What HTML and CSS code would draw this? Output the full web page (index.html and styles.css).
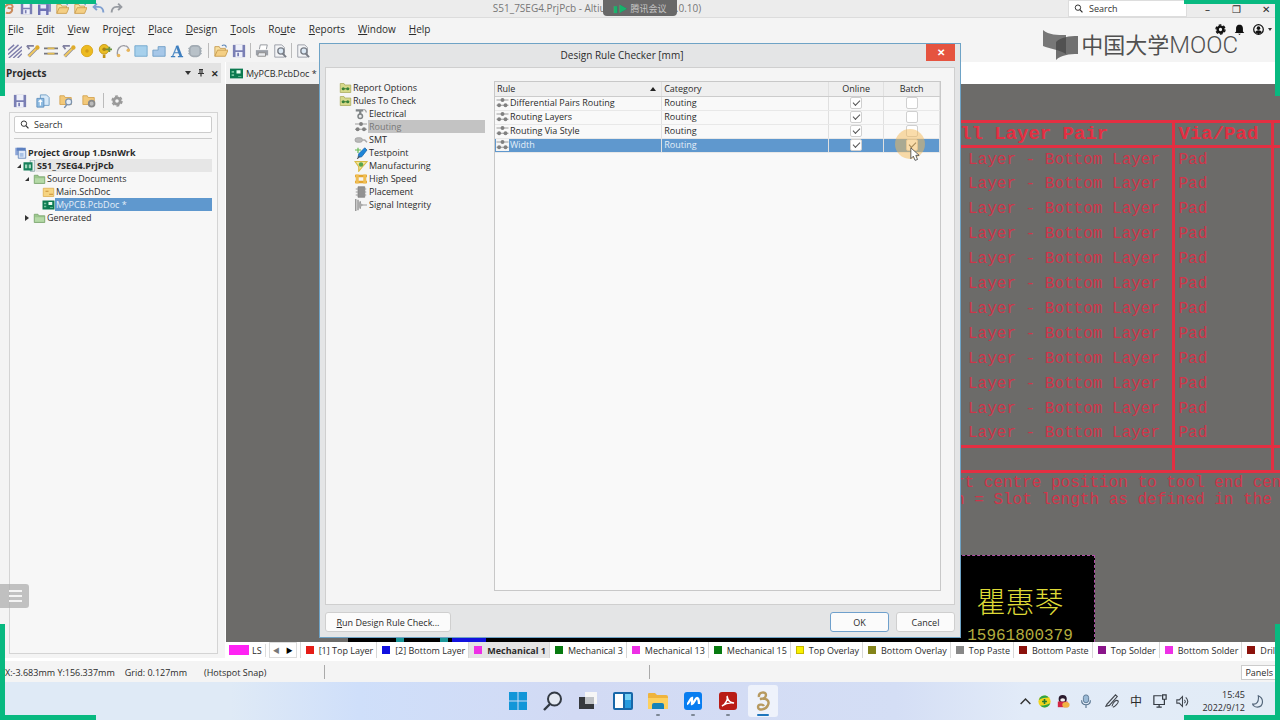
FILE: index.html
```html
<!DOCTYPE html>
<html lang="en">
<head>
<meta charset="utf-8">
<title>S51_7SEG4.PrjPcb - Altium Designer</title>
<link rel="stylesheet" href="styles.css">
</head>
<body>
<svg class="sprite" aria-hidden="true">
  <symbol id="save" viewBox="0 0 16 16"><path d="M1 1h14v14H1z" fill="#7a7fb4"/><path d="M4 1h8v6H4zM4 9h8v6H4z" fill="#eef0fa"/><path d="M6 10h2v4H6z" fill="#7a7fb4"/></symbol>
  <symbol id="saveall" viewBox="0 0 16 16"><path d="M4 0h12v12H4z" fill="#8c90c4"/><path d="M0 3h13v13H0z" fill="#6d71b4"/><path d="M3 3h7v5H3zM3 11h7v5H3z" fill="#e6e8f8"/></symbol>
  <symbol id="open" viewBox="0 0 16 16"><path d="M1 14V3h5l1 2h6v3" fill="#f7dfa0" stroke="#c79a4b"/><path d="M1 14l3-7h12l-3 7z" fill="#f4cf84" stroke="#c79a4b"/><path d="M9 2c3-2 5 0 5 2" fill="none" stroke="#5d86b8" stroke-width="1.3"/></symbol>
  <symbol id="undo" viewBox="0 0 16 16"><path d="M2 6h6c4 0 6 3 6 7M6 2L2 6l4 4" fill="none" stroke="#7f9fd0" stroke-width="2.4"/></symbol>
  <symbol id="redo" viewBox="0 0 16 16"><path d="M14 6H8c-4 0-6 3-6 7M10 2l4 4-4 4" fill="none" stroke="#979ba1" stroke-width="2.4"/></symbol>
  <symbol id="app" viewBox="0 0 16 16"><path d="M2 9C4 2 12 1 13 5c1 3-4 3-6 2m5 1c2 4-3 7-7 5" fill="none" stroke="#c98a5a" stroke-width="2.4"/></symbol>
  <symbol id="hatch" viewBox="0 0 16 16"><path d="M0 7l7-6M0 12L12 1M1 16L16 3M6 16l10-9M11 16l5-5" stroke="#7d7daa" stroke-width="1.6"/></symbol>
  <symbol id="track" viewBox="0 0 16 16"><path d="M1 2h8M1 2l3 4" fill="none" stroke="#8080a0" stroke-width="2"/><path d="M3 14L12 5" stroke="#8a8a9a" stroke-width="4"/><path d="M3 14L12 5" stroke="#f0c860" stroke-width="2.4"/><circle cx="13" cy="4" r="2.5" fill="#dfac2c"/></symbol>
  <symbol id="pairs" viewBox="0 0 16 16"><path d="M0 5h16M0 11h16" stroke="#77777f" stroke-width="1.8"/><path d="M4 5h8M4 11h8" stroke="#e1bb53" stroke-width="2"/></symbol>
  <symbol id="pad" viewBox="0 0 16 16"><circle cx="8" cy="8" r="6.5" fill="#edbb20" stroke="#d9a51a"/><circle cx="8" cy="8" r="2" fill="#d39c18"/></symbol>
  <symbol id="via" viewBox="0 0 16 16"><circle cx="7" cy="6" r="5.5" fill="#e9bd24" stroke="#c39313"/><path d="M7 12v4" stroke="#c39313" stroke-width="3"/><path d="M8 6h8M13 3v6" stroke="#6c9440" stroke-width="2"/><circle cx="7" cy="6" r="2" fill="#a98314"/></symbol>
  <symbol id="arc" viewBox="0 0 16 16"><path d="M2 14C0 6 5 1 10 2c3 0 5 3 5 6" fill="none" stroke="#9b9ba3" stroke-width="1.6"/><circle cx="3" cy="13" r="2" fill="#e7b55b"/><circle cx="14" cy="7" r="2" fill="#e7b55b"/></symbol>
  <symbol id="fill" viewBox="0 0 16 16"><path d="M1 2h14v12H1z" fill="#a6d0ec" stroke="#6fa6cb"/></symbol>
  <symbol id="poly" viewBox="0 0 16 16"><path d="M1 14V7h6V3h8v11z" fill="#a6c7e8" stroke="#6d9dc6"/></symbol>
  <symbol id="letter" viewBox="0 0 16 16"><path d="M3 14L8 2" stroke="#5b93c9" stroke-width="1.5"/><path d="M8 2l4.500 12" stroke="#3f7fbf" stroke-width="3"/><path d="M5 10h6M1 14.500h5M9 14.500h6" stroke="#3f7fbf" stroke-width="1.400"/></symbol>
  <symbol id="chip" viewBox="0 0 16 16"><rect x="2" y="2" width="12" height="12" rx="4" fill="#b8c1c8" stroke="#a2abb3" stroke-width="2"/><path d="M0 5h2M0 8h2M0 11h2M14 5h2M14 8h2M14 11h2" stroke="#a2abb3"/></symbol>
  <symbol id="print" viewBox="0 0 16 16"><path d="M5 6l1-5h8l-1 5" fill="#fff" stroke="#8b8f96"/><path d="M1 7h14v6H1z" fill="#9ca0a8"/><path d="M4 10h8v4H3z" fill="#e9ebee" stroke="#888"/></symbol>
  <symbol id="preview" viewBox="0 0 16 16"><path d="M2 1h8l3 3v11H2z" fill="#f3f4f6" stroke="#9297a0"/><circle cx="9" cy="8" r="3.5" fill="#dbe8f4" stroke="#787d86" stroke-width="1.5"/><path d="M11 11l4 4" stroke="#787d86" stroke-width="2"/></symbol>
  <symbol id="docs" viewBox="0 0 16 16"><path d="M5 1h7l3 3v9H5z" fill="#d7e9f8" stroke="#6a9ac4"/><path d="M1 5h8v10H1z" fill="#8fbce2" stroke="#5b8dbb"/><path d="M5 13V7m-2 2l2-2 2 2" fill="none" stroke="#fff" stroke-width="1.4"/></symbol>
  <symbol id="foldsearch" viewBox="0 0 16 16"><path d="M1 12V2h5l1 2h7v8z" fill="#f3c979" stroke="#d3a451"/><circle cx="11" cy="9" r="3.4" fill="#e5eef8" stroke="#7d93ad" stroke-width="1.4"/><path d="M9 12l-3 4" stroke="#7d93ad" stroke-width="1.6"/></symbol>
  <symbol id="foldgear" viewBox="0 0 16 16"><path d="M1 12V2h5l1 2h7v8z" fill="#f3c979" stroke="#d3a451"/><circle cx="11" cy="11" r="3.3" fill="#bbb" stroke="#8a8a8a" stroke-width="2"/></symbol>
  <symbol id="gear" viewBox="0 0 16 16"><circle cx="8" cy="8" r="4.2" fill="none" stroke="currentColor" stroke-width="3.6"/><circle cx="8" cy="8" r="6.6" fill="none" stroke="currentColor" stroke-width="2" stroke-dasharray="3.900 3"/></symbol>
  <symbol id="lens" viewBox="0 0 16 16"><circle cx="7" cy="6.5" r="4.8" fill="none" stroke="currentColor" stroke-width="1.7"/><path d="M10.5 10l4.5 5" stroke="currentColor" stroke-width="2"/></symbol>
  <symbol id="group" viewBox="0 0 16 16"><path d="M1 1h10v10H1z" fill="#8da6d8"/><path d="M5 3h8l2 2v10H5z" fill="#dfe8f8" stroke="#5477ad"/><path d="M3 1h12v4H3z" fill="#5d80c0"/><path d="M7 8h5v5H7z" fill="#a9c2e6"/></symbol>
  <symbol id="project" viewBox="0 0 16 16"><path d="M9 0h6v15H9z" fill="#e8f0ee" stroke="#78959a"/><path d="M0 3h12v11H0z" fill="#17805a"/><path d="M2 6h3v5H2zM7 6h3v5H7z" fill="#a3d8bd"/></symbol>
  <symbol id="green" viewBox="0 0 16 16"><path d="M1 14V3h5l1 2h8v9z" fill="#9cc78d" stroke="#74a067"/><path d="M2 7h12v6H2z" fill="#b5d9a7"/></symbol>
  <symbol id="sch" viewBox="0 0 16 16"><path d="M1 3h14v11H1z" fill="#f6d481" stroke="#dcab4c"/><path d="M4 7h4m1 4h5" stroke="#c98f38" stroke-width="1.6"/></symbol>
  <symbol id="pcb" viewBox="0 0 16 16"><path d="M0 2h16v12H0z" fill="#0c7a50"/><path d="M8 4h5v4H8z" fill="#e8fff2"/><path d="M2 5h3v2H2zm0 4h3v2H2zm8 2h4v1h-4z" fill="#75c59e"/></symbol>
  <symbol id="rules" viewBox="0 0 16 16"><path d="M1 14V2h5l1 2h8v10z" fill="#d6d98a" stroke="#a8a95b"/><path d="M3 9h10" stroke="#3a7f35" stroke-width="1.3"/><circle cx="5" cy="9" r="2" fill="#398139"/><circle cx="11" cy="9" r="2" fill="#398139"/></symbol>
  <symbol id="electrical" viewBox="0 0 16 16"><path d="M1 3h10M7 4v4" stroke="#7f8486" stroke-width="3"/><circle cx="7" cy="11" r="3" fill="#eee" stroke="#7f8486" stroke-width="2"/><path d="M11 2c3 0 4 2 4 4" fill="none" stroke="#9a9a9a" stroke-width="1.500"/></symbol>
  <symbol id="routing" viewBox="0 0 16 16"><path d="M0 4h16M0 11h16" stroke="#9a9a9a" stroke-width="1.3"/><circle cx="8" cy="4" r="2.6" fill="#808080"/><circle cx="3.5" cy="11" r="2.6" fill="#808080"/><circle cx="12" cy="11" r="2.6" fill="#808080"/></symbol>
  <symbol id="smt" viewBox="0 0 16 16"><rect x="0" y="5" width="10" height="6" rx="3" fill="#b9b9b9" stroke="#999"/><path d="M10 8h3l3 3" fill="none" stroke="#aaa" stroke-width="2"/></symbol>
  <symbol id="test" viewBox="0 0 16 16"><path d="M5 9l8-8 3 3-7 9-5 1z" fill="#1c85d8" stroke="#1562a7"/><path d="M3 16l3-4" stroke="#555" stroke-width="1.5"/><path d="M4 1v7M0 4h8" stroke="#65ba51" stroke-width="1.6"/></symbol>
  <symbol id="manu" viewBox="0 0 16 16"><path d="M0 2h16L10 9l-5 6V9z" fill="#f0e39a" stroke="#d8bb43" stroke-width="1.500"/><circle cx="8" cy="6" r="3" fill="#58a44d"/></symbol>
  <symbol id="speed" viewBox="0 0 16 16"><path d="M0 4h16M0 12h16" stroke="#e3a52f" stroke-width="3.500"/><path d="M3 2v12M13 2v12" stroke="#efbd53" stroke-width="4"/></symbol>
  <symbol id="place" viewBox="0 0 16 16"><path d="M4 1h9v14H4z" fill="#929292" stroke="#808080"/><path d="M1 4h3M1 8h3M1 12h3M13 4h2M13 8h2M13 12h2" stroke="#9b9b9b" stroke-width="1.6"/></symbol>
  <symbol id="signal" viewBox="0 0 16 16"><path d="M1 0v16M4 1v14M7 3v10" stroke="#999" stroke-width="2"/><path d="M4 3l7 5-7 5z" fill="#aaa"/><path d="M8 8h8" stroke="#aaa" stroke-width="1.6"/></symbol>
  <symbol id="bell" viewBox="0 0 16 16"><path d="M8 1c-4 0-5 3-5 6v4l-2 2h14l-2-2V7c0-3-1-6-5-6zM6 14h4l-2 2z" fill="#111"/></symbol>
  <symbol id="user" viewBox="0 0 16 16"><circle cx="8" cy="8" r="7" fill="none" stroke="#111" stroke-width="1.8"/><circle cx="8" cy="6" r="2.6" fill="#111"/><path d="M3 12c2-4 8-4 10 0l-5 3z" fill="#111"/></symbol>
  <symbol id="pin" viewBox="0 0 16 16"><path d="M4 1h8M6 1v8m4-8v8M2 9h12M8 9v6" stroke="#333" stroke-width="2.4"/></symbol>
  <symbol id="windows" viewBox="0 0 20 20"><path d="M1 1h8.500v8.500H1zM10.500 1H19v8.500h-8.500zM1 10.500h8.500V19H1zM10.500 10.500H19V19h-8.500z" fill="#1296d8"/></symbol>
  <symbol id="find" viewBox="0 0 20 20"><circle cx="11.500" cy="8" r="6.500" fill="#e4e9f2" stroke="#333a44" stroke-width="2"/><path d="M7 13l-6 6" stroke="#333a44" stroke-width="2.400"/></symbol>
  <symbol id="tasks" viewBox="0 0 20 20"><path d="M7 1h12v12H7z" fill="#f6f6f6"/><path d="M1 6h15v12H1z" fill="#36393d"/><path d="M7 6h9v7H7z" fill="#bfc2c6"/></symbol>
  <symbol id="widgets" viewBox="0 0 20 20"><rect x="0" y="1" width="20" height="18" rx="2" fill="#1767a9"/><path d="M2 3h8v14H2z" fill="#fff"/><path d="M12 3h6v6h-6z" fill="#75d1f5"/><path d="M12 9h6v8h-6z" fill="#269bdf"/></symbol>
  <symbol id="folder" viewBox="0 0 20 20"><path d="M0 17V3q0-1 1-1h6l2 2h9q2 0 2 2v11z" fill="#efb43e"/><path d="M0 7h20v11H0z" fill="#fdd05e"/><path d="M4 18v-4q0-2 2-2h8q2 0 2 2v4z" fill="#1682b8"/></symbol>
  <symbol id="meeting" viewBox="0 0 20 20"><rect x="1" y="1" width="18" height="18" rx="3" fill="#087df0"/><path d="M4 13c2 0 3-6 5-6v6c2 0 3-6 5-6 1 0 2 2 2 6" fill="none" stroke="#fff" stroke-width="2.300"/></symbol>
  <symbol id="pdf" viewBox="0 0 20 20"><rect x="1" y="1" width="18" height="18" rx="3" fill="#b91c16"/><path d="M4 15c4-2 6-7 5-10 1 5 3 7 7 7-5-1-8 0-12 3z" fill="none" stroke="#fff" stroke-width="1.400"/></symbol>
  <symbol id="altium" viewBox="0 0 20 20"><path d="M6 6C5 1 13 0 13 4c0 3-3 4-6 4 6-2 10 2 8 6-2 5-10 6-10 2 0-3 5-3 6-1" fill="none" stroke="#b79a60" stroke-width="2.400"/></symbol>
  <symbol id="chev" viewBox="0 0 16 16"><path d="M2 11l6-6 6 6" fill="none" stroke="#333" stroke-width="1.800"/></symbol>
  <symbol id="guard" viewBox="0 0 16 16"><circle cx="8" cy="8" r="7.500" fill="#f1d51c"/><path d="M1 6c2-6 9-7 12-3C8 3 5 4 1 6zM15 10c-2 6-9 7-12 3 5 0 8-1 12-3z" fill="#2ba44a"/><path d="M8 5v6M5 8h6" stroke="#227a31" stroke-width="2"/></symbol>
  <symbol id="qq" viewBox="0 0 16 16"><circle cx="7" cy="5" r="5" fill="#2a1a2e"/><path d="M1 8h12v7H1z" fill="#d32645"/><ellipse cx="7" cy="6" rx="3" ry="2" fill="#f5f0f0"/><ellipse cx="11" cy="12" rx="4.500" ry="3.500" fill="#f1b341"/></symbol>
  <symbol id="mic" viewBox="0 0 16 16"><rect x="5" y="1" width="6" height="9" rx="3" fill="#9bbad6" stroke="#58748f"/><path d="M3 7c0 7 10 7 10 0M8 12v4" fill="none" stroke="#58748f" stroke-width="1.300"/></symbol>
  <symbol id="pen" viewBox="0 0 16 16"><path d="M2 12L12 1l2 2-9 10-4 1zM8 14c1-5 5-8 7-6 1 2-4 7-6 7" fill="none" stroke="#43484f" stroke-width="1.300"/></symbol>
  <symbol id="screen" viewBox="0 0 16 16"><path d="M10 2H1v10h12V9M7 12v3M4 15h6M11 1h4v5h-4zM13 6v4" fill="none" stroke="#343a42" stroke-width="1.400"/></symbol>
  <symbol id="speaker" viewBox="0 0 16 16"><path d="M1 6h3l4-4v12l-4-4H1zM10 6c2 1 2 3 0 4M12 3c3 3 3 7 0 10" fill="none" stroke="#40464e" stroke-width="1.300"/></symbol>
  <symbol id="moon" viewBox="0 0 16 16"><path d="M9 1c7 3 7 13-1 14-4 0-6-3-6-4 5 1 8-3 7-10z" fill="none" stroke="#53667a" stroke-width="1.400"/></symbol>
</svg>

<header class="titlebar">
  <div class="quick">
    <svg><use href="#app"/></svg><svg><use href="#save"/></svg><svg><use href="#saveall"/></svg><svg><use href="#open"/></svg><svg><use href="#open"/></svg><svg><use href="#undo"/></svg><svg><use href="#redo"/></svg>
  </div>
  <div class="apptitle">S51_7SEG4.PrjPcb - Altium Designer (20.0.10)</div>
  <div class="titleright">
    <label class="topsearch"><svg><use href="#lens"/></svg><input type="text" placeholder="Search" aria-label="Search"></label>
    <div class="winbtns"><button aria-label="Minimize">–</button><button aria-label="Restore">❐</button><button aria-label="Close">✕</button></div>
  </div>
  <div class="meetingbar"><span class="live">▮▶</span>腾讯会议</div>
</header>

<nav class="menubar">
  <button><u>F</u>ile</button><button><u>E</u>dit</button><button><u>V</u>iew</button><button>Proje<u>c</u>t</button><button><u>P</u>lace</button><button><u>D</u>esign</button><button><u>T</u>ools</button><button>Ro<u>u</u>te</button><button><u>R</u>eports</button><button><u>W</u>indow</button><button><u>H</u>elp</button>
  <div class="account"><svg><use href="#gear"/></svg><svg><use href="#bell"/></svg><svg><use href="#user"/></svg><i class="down"></i></div>
</nav>

<div class="toolbar">
  <svg><use href="#hatch"/></svg><svg><use href="#track"/></svg><svg><use href="#pairs"/></svg><svg><use href="#track"/></svg><svg><use href="#pad"/></svg><svg><use href="#via"/></svg><svg><use href="#arc"/></svg><svg><use href="#fill"/></svg><svg><use href="#poly"/></svg><svg><use href="#letter"/></svg><svg><use href="#chip"/></svg><i class="wide"></i><svg><use href="#open"/></svg><svg><use href="#save"/></svg><i></i><svg><use href="#print"/></svg><svg><use href="#preview"/></svg><i></i><svg><use href="#preview"/></svg>
</div>

<main class="main">
  <aside class="projects">
    <div class="panelhead"><h2>Projects</h2><i class="down"></i><svg><use href="#pin"/></svg><span class="x">✕</span></div>
    <div class="paneltools"><svg><use href="#save"/></svg><svg><use href="#docs"/></svg><svg><use href="#foldsearch"/></svg><svg><use href="#foldgear"/></svg><i></i><svg class="grey"><use href="#gear"/></svg></div>
    <div class="panelbody">
      <label class="search"><svg><use href="#lens"/></svg><input type="text" placeholder="Search" aria-label="Search projects"></label>
      <hr>
      <ul class="tree">
        <li class="bold"><svg><use href="#group"/></svg><span>Project Group 1.DsnWrk</span></li>
        <li class="bold lvl1"><b class="open"></b><svg><use href="#project"/></svg><span class="shade">S51_7SEG4.PrjPcb</span></li>
        <li class="lvl2"><b class="open"></b><svg><use href="#green"/></svg><span>Source Documents</span></li>
        <li class="lvl3"><svg><use href="#sch"/></svg><span>Main.SchDoc</span></li>
        <li class="lvl3"><svg><use href="#pcb"/></svg><span class="sel">MyPCB.PcbDoc *</span></li>
        <li class="lvl2"><b class="shut"></b><svg><use href="#green"/></svg><span>Generated</span></li>
      </ul>
    </div>
  </aside>

  <section class="work">
    <div class="doctabs"><button><svg><use href="#pcb"/></svg>MyPCB.PcbDoc *</button></div>
    <div class="canvas">
      <table class="drill">
        <colgroup><col class="c1"><col class="c2"><col class="c3"></colgroup>
        <thead><tr><th>ll Layer Pair</th><th>Via/Pad</th><th></th></tr></thead>
        <tbody>
          <tr><td>Layer - Bottom Layer</td><td>Pad</td><td></td></tr>
          <tr><td>Layer - Bottom Layer</td><td>Pad</td><td></td></tr>
          <tr><td>Layer - Bottom Layer</td><td>Pad</td><td></td></tr>
          <tr><td>Layer - Bottom Layer</td><td>Pad</td><td></td></tr>
          <tr><td>Layer - Bottom Layer</td><td>Pad</td><td></td></tr>
          <tr><td>Layer - Bottom Layer</td><td>Pad</td><td></td></tr>
          <tr><td>Layer - Bottom Layer</td><td>Pad</td><td></td></tr>
          <tr><td>Layer - Bottom Layer</td><td>Pad</td><td></td></tr>
          <tr><td>Layer - Bottom Layer</td><td>Pad</td><td></td></tr>
          <tr><td>Layer - Bottom Layer</td><td>Pad</td><td></td></tr>
          <tr><td>Layer - Bottom Layer</td><td>Pad</td><td></td></tr>
          <tr><td>Layer - Bottom Layer</td><td>Pad</td><td></td></tr>
        </tbody>
        <tfoot><tr><td></td><td></td><td></td></tr></tfoot>
      </table>
      <p class="notes">rt centre position to tool end cen<br>h = Slot length as defined in the</p>
      <div class="board"><div class="owner"><span class="name">瞿惠琴</span><span class="phone">15961800379</span></div><div class="traces"><i></i><i></i><i class="blue"></i></div></div>
    </div>
    <div class="layers">
      <div class="ls"><i></i><span>LS</span></div>
      <div class="scroll"><button aria-label="Scroll left" class="off">◀</button><button aria-label="Scroll right">▶</button></div>
      <button class="layer"><i class="red"></i>[1] Top Layer</button><button class="layer"><i class="blue"></i>[2] Bottom Layer</button><button class="layer on"><i class="pink"></i>Mechanical 1</button><button class="layer"><i class="dgreen"></i>Mechanical 3</button><button class="layer"><i class="pink"></i>Mechanical 13</button><button class="layer"><i class="dgreen"></i>Mechanical 15</button><button class="layer"><i class="yellow"></i>Top Overlay</button><button class="layer"><i class="olive"></i>Bottom Overlay</button><button class="layer"><i class="gray"></i>Top Paste</button><button class="layer"><i class="maroon"></i>Bottom Paste</button><button class="layer"><i class="purple"></i>Top Solder</button><button class="layer"><i class="pink"></i>Bottom Solder</button><button class="layer"><i class="maroon"></i>Drill</button>
    </div>
  </section>
</main>

<footer class="status">
  <div class="coords"><span>X:-3.683mm Y:156.337mm</span><span>Grid: 0.127mm</span><span class="snap">(Hotspot Snap)</span></div>
  <div class="cell"></div><div class="cell"></div>
  <button>Panels</button>
</footer>

<div class="taskbar">
  <div class="apps">
    <button aria-label="Start"><svg><use href="#windows"/></svg></button><button aria-label="Search"><svg><use href="#find"/></svg></button><button aria-label="Task view"><svg><use href="#tasks"/></svg></button><button aria-label="Widgets"><svg><use href="#widgets"/></svg></button><button aria-label="Explorer" class="run"><svg><use href="#folder"/></svg></button><button aria-label="Meeting" class="run"><svg><use href="#meeting"/></svg></button><button aria-label="Acrobat" class="run"><svg><use href="#pdf"/></svg></button><button aria-label="Altium" class="run current"><svg><use href="#altium"/></svg></button>
  </div>
  <div class="tray">
    <svg><use href="#chev"/></svg><svg><use href="#guard"/></svg><svg><use href="#qq"/></svg><svg class="wide"><use href="#mic"/></svg><svg class="wide"><use href="#pen"/></svg><span class="ime">中</span><svg class="wide"><use href="#screen"/></svg><svg><use href="#speaker"/></svg>
    <time>15:45<br>2022/9/12</time><svg><use href="#moon"/></svg>
  </div>
</div>

<section class="dialog" role="dialog" aria-labelledby="dlgtitle">
  <div class="dlghead"><h1 id="dlgtitle">Design Rule Checker [mm]</h1><button class="close" aria-label="Close dialog">✕</button></div>
  <div class="dlgbody">
    <ul class="tree rules">
      <li><svg><use href="#rules"/></svg><span>Report Options</span></li>
      <li><svg><use href="#rules"/></svg><span>Rules To Check</span></li>
      <li class="sub"><svg><use href="#electrical"/></svg><span>Electrical</span></li>
      <li class="sub"><svg><use href="#routing"/></svg><span class="dim">Routing</span></li>
      <li class="sub"><svg><use href="#smt"/></svg><span>SMT</span></li>
      <li class="sub"><svg><use href="#test"/></svg><span>Testpoint</span></li>
      <li class="sub"><svg><use href="#manu"/></svg><span>Manufacturing</span></li>
      <li class="sub"><svg><use href="#speed"/></svg><span>High Speed</span></li>
      <li class="sub"><svg><use href="#place"/></svg><span>Placement</span></li>
      <li class="sub"><svg><use href="#signal"/></svg><span>Signal Integrity</span></li>
    </ul>
    <div class="gridbox">
      <table class="grid">
        <colgroup><col class="g1"><col class="g1"><col class="g2"><col class="g2"></colgroup>
        <thead><tr><th><div class="sort">Rule<i class="up"></i></div></th><th>Category</th><th class="mid">Online</th><th class="mid">Batch</th></tr></thead>
        <tbody>
          <tr><td><div class="rule"><svg><use href="#routing"/></svg><span>Differential Pairs Routing</span></div></td><td>Routing</td><td class="mid"><input type="checkbox" checked aria-label="Differential Pairs Routing online"></td><td class="mid"><input type="checkbox" aria-label="Differential Pairs Routing batch"></td></tr>
          <tr><td><div class="rule"><svg><use href="#routing"/></svg><span>Routing Layers</span></div></td><td>Routing</td><td class="mid"><input type="checkbox" checked aria-label="Routing Layers online"></td><td class="mid"><input type="checkbox" aria-label="Routing Layers batch"></td></tr>
          <tr><td><div class="rule"><svg><use href="#routing"/></svg><span>Routing Via Style</span></div></td><td>Routing</td><td class="mid"><input type="checkbox" checked aria-label="Routing Via Style online"></td><td class="mid"><input type="checkbox" aria-label="Routing Via Style batch"></td></tr>
          <tr class="picked"><td><div class="rule"><svg><use href="#routing"/></svg><span>Width</span></div></td><td>Routing</td><td class="mid"><input type="checkbox" checked aria-label="Width online"></td><td class="mid"><input type="checkbox" checked aria-label="Width batch"></td></tr>
        </tbody>
      </table>
    </div>
  </div>
  <div class="dlgfoot"><button class="runbtn"><u>R</u>un Design Rule Check...</button><button class="ok">OK</button><button>Cancel</button></div>
</section>

<div class="pointer"><svg viewBox="0 0 12 18"><path d="M1 1v13l3-3 2 5 3-1-2-5h4z" fill="#fff" stroke="#444"/></svg></div>
<div class="brand"><svg viewBox="0 0 36 32"><path d="M1 1c6 5 14 5 23 5v19C15 20 8 20 1 17z" fill="#777"/><path d="M36 7c-9 0-17 1-22 6v18c5-5 13-6 22-6z" fill="#444" fill-opacity=".75"/></svg><span class="cn">中国大学</span><span class="en">MOOC</span></div>
<button class="drawer" aria-label="Open drawer"><i></i><i></i><i></i></button>
<div class="corner tl"></div><div class="corner tr"></div><div class="corner bl"></div><div class="corner br"></div>
</body>
</html>
```
FILE: styles.css
```css
* { box-sizing: border-box; }
body {
  margin: 0; min-height: 100vh; display: flex; flex-direction: column; position: relative; overflow: hidden;
  font: 9px/13px "Open Sans", "Noto Sans", "Noto Sans CJK SC", sans-serif; color: #2b2b2b; background: #f4f4f4;
}
button, input { font: inherit; color: inherit; border: 0; background: none; padding: 0; margin: 0; }
input::placeholder { color: #333; opacity: 1; }
h1, h2, ul, p { margin: 0; padding: 0; font-size: inherit; font-weight: inherit; list-style: none; }
svg { width: 13px; height: 13px; flex: none; display: block; }
.sprite { position: absolute; width: 0; height: 0; }
.down { border: 3px solid transparent; border-top: 4px solid #333; border-bottom: 0; }
.up { border: 3px solid transparent; border-bottom: 4px solid #222; border-top: 0; }

.titlebar { position: relative; height: 18px; display: grid; grid-template-columns: 1fr auto 1fr; align-items: center; background: #ececec; border-bottom: 1px solid #dcdcdc; }
.quick { display: flex; gap: 5px; padding-left: 2px; }
.apptitle { font-size: 10px; color: #777; padding-right: 86px; }
.titleright { display: flex; justify-content: flex-end; align-self: start; }
.topsearch { display: flex; align-items: center; gap: 6px; width: 119px; height: 17px; background: #fff; border: 1px solid #ddd; padding-left: 5px; }
.topsearch svg, .search svg { width: 9px; height: 9px; }
.topsearch input, .search input { width: 100%; min-width: 0; }
.winbtns { display: flex; gap: 20px; padding: 2px 10px 0 16px; font-size: 10px; }
.winbtns button { width: 9px; text-align: center; }
.meetingbar { position: absolute; left: 603px; top: 0; width: 74px; height: 16px; background: #686868; border-radius: 0 0 4px 4px; color: #c4c4c4; font-size: 9px; text-align: center; line-height: 17px; white-space: nowrap; }
.live { color: #18b36c; margin-right: 3px; }

.menubar { height: 23px; display: flex; align-items: center; gap: 13px; padding-left: 8px; font-size: 10px; }
.menubar button { margin-right: -1px; padding-right: 1px; }
.account { margin-left: auto; display: flex; align-items: center; gap: 8px; padding-right: 8px; color: #111; }
.account svg { width: 11px; height: 11px; }
.account .down { margin-left: -4px; border-width: 3px 2px 0; }

.toolbar { height: 21px; display: flex; align-items: center; gap: 4px; padding: 0 8px 2px; }
.toolbar svg { width: 14px; height: 14px; }
.toolbar > i, .paneltools > i { width: 1px; height: 15px; background: #bbb; }
.toolbar > .wide { margin: 0 1px 0 2px; }

.main { flex: 1; display: flex; min-height: 0; }
.projects { width: 226px; flex: none; display: flex; flex-direction: column; padding: 1px 4px 4px 5px; border-right: 1px solid #fff; }
.panelhead { display: flex; align-items: center; height: 20px; background: #e3e3e3; gap: 6px; padding: 0 2px 0 1px; }
.panelhead h2 { flex: 1; font-weight: bold; font-size: 10px; }
.panelhead svg { width: 8px; height: 8px; }
.x { font-size: 9px; font-weight: bold; }
.paneltools { display: flex; align-items: center; gap: 9px; height: 29px; padding: 6px 9px 0 8px; }
.paneltools svg { width: 14px; height: 14px; }
.paneltools > i { margin: 0 -2px; }
.grey { color: #999; }
.paneltools .grey { width: 12px; height: 12px; }
.panelbody { flex: 1; border: 1px solid #d4d4d4; margin: 0 3px 0 4px; padding: 3px 5px 3px 4px; background: #f7f7f7; }
.search { display: flex; align-items: center; gap: 5px; height: 17px; background: #fff; border: 1px solid #ccc; border-radius: 2px; padding-left: 5px; }
.panelbody hr { border: 0; border-top: 1px solid #ccc; margin: 5px 0 7px; }
.tree li { display: flex; align-items: center; height: 13px; white-space: nowrap; }
.tree span { flex: 1; padding-left: 1px; }
.tree li svg { height: 12px; }
.bold { font-weight: bold; }
.lvl1 { padding-left: 1px; } .lvl2 { padding-left: 9px; } .lvl3 { padding-left: 28px; }
.open { border-left: 4px solid transparent; border-bottom: 4px solid #333; margin: 0 4px 0 2px; }
.shut { border: 3px solid transparent; border-left: 4px solid #333; border-right: 0; margin: 0 4px 0 2px; }
.lvl1 .open { margin-right: 2px; }
.shade { background: #e6e6e6; }
.tree .sel, .picked { background: #5f98ce; color: #e4eef8; }

.work { flex: 1; min-width: 0; display: flex; flex-direction: column; }
.doctabs { height: 22px; display: flex; background: #fff; }
.doctabs button { display: flex; align-items: center; gap: 3px; background: #f0f0f0; padding: 0 4px; border-right: 1px solid #d5d5d5; }
.canvas { flex: 1; position: relative; overflow: hidden; background: #6c6b69; }
.drill { position: absolute; left: 734px; top: 36px; width: 340px; table-layout: fixed; border-collapse: collapse; font: 16px/20px "Liberation Mono", monospace; color: #d0354a; white-space: nowrap; }
.c1 { width: 213px; } .c2 { width: 99px; }
.drill tr { height: 25px; }
.drill th, .drill td { padding: 0 0 0 4px; text-align: left; border-left: 3px solid #e42f42; }
.drill th { font-size: 19px; font-weight: bold; color: #e42f42; border-top: 3px solid #e42f42; border-bottom: 3px solid #e42f42; }
.drill td:first-child { padding-left: 8px; border-left: 0; }
.drill th:first-child { padding-left: 0; border-left: 0; }
.drill tfoot td { border-top: 3px solid #e42f42; border-bottom: 3px solid #e42f42; }
.notes { position: absolute; left: 729px; top: 391px; width: 340px; font: 16px/17px "Liberation Mono", monospace; color: #d0354a; white-space: nowrap; }
.board { position: absolute; left: 122px; top: 471px; bottom: 0; width: 747px; background: #000; border: 1px dashed #b04fa8; border-width: 1px 1px 0 0; }
.owner { display: flex; flex-direction: column; align-items: center; width: 148px; margin: 26px 0 0 auto; }
.name { font: 29px/36px "Noto Sans CJK SC", sans-serif; font-weight: 300; color: #ddd936; }
.phone { font: 16px/20px "Liberation Mono", monospace; color: #b4ad3e; padding-top: 8px; }
.traces { position: absolute; left: 48px; bottom: 0; display: flex; gap: 36px; }
.traces i { width: 8px; height: 4px; background: #1c9698; }
.traces .blue { width: 34px; background: #1212dd; margin-left: -32px; }

.layers { height: 16px; display: flex; background: #fff; overflow: hidden; white-space: nowrap; }
.ls { display: flex; align-items: center; padding: 0 3px; flex: none; }
.ls i { width: 20px; height: 10px; background: #ff22f4; }
.ls span { padding: 0 3px; border: 1px solid #ddd; border-width: 0 1px 0 0; }
.scroll { display: flex; width: 28px; flex: none; border: 1px solid #ddd; margin-right: 3px; }
.scroll button { flex: 1; font-size: 7px; color: #000; }
.scroll .off { color: #777; }
.layer { display: flex; align-items: center; gap: 5px; padding: 0 3px 0 5px; border-left: 1px solid #d8d8d8; flex: none; }
.layer i { width: 8px; height: 8px; }
.layer.on { background: #e5e5e5; font-weight: bold; }
.red { background: #e51c16; } .layer .blue { background: #1010e0; } .pink { background: #ee30e6; } .dgreen { background: #087a10; } .yellow { background: #f8f000; border: 1px solid #c8b800; } .olive { background: #84841a; } .gray { background: #888; } .maroon { background: #8c120c; } .purple { background: #8a158a; }

.status { height: 24px; display: flex; align-items: center; padding: 1px 3px 0 5px; border-top: 3px solid #fff; }
.coords { display: flex; gap: 10px; width: 319px; white-space: nowrap; }
.snap { padding-left: 7px; }
.cell { height: 14px; width: 325px; border-left: 1px solid #aaa; }
.status button { margin-left: auto; border: 1px solid #ccc; background: #fff; padding: 0 3px; }
.taskbar { height: 38px; display: grid; grid-template-columns: 1fr auto 1fr; align-items: center; background: linear-gradient(90deg, #dfeaf6 0%, #dfeaf6 18%, #cfdffa 28%, #d2daf4 45%, #d4def5 70%, #e2ebf8 80%, #e2ecf6 100%); }
.apps { grid-column: 2; display: flex; gap: 5px; }
.apps button { width: 30px; height: 32px; display: grid; place-items: center; position: relative; border-radius: 3px; }
.apps svg { width: 20px; height: 20px; }
.run::after { content: ""; position: absolute; left: 13px; bottom: 1px; width: 4px; height: 2px; background: #7d8795; border-radius: 1px; }
.current { background: #eef2fb; }
.current::after { left: 9px; width: 12px; background: #1d75bd; }
.tray { display: flex; align-items: center; justify-content: flex-end; gap: 6px; padding-right: 16px; }
.tray svg { width: 13px; height: 13px; }
.tray .wide { width: 14px; height: 14px; margin: 0 3px; }
.ime { font-size: 12px; margin: 0 2px; }
.tray time { text-align: right; width: 50px; white-space: nowrap; }

.dialog { position: absolute; left: 319px; top: 43px; width: 642px; height: 595px; display: flex; flex-direction: column; background: #e4e5e6; border: 1px solid #6ea3c6; padding: 0 5px 5px; }
.dlghead { position: relative; height: 23px; display: flex; align-items: center; justify-content: center; padding-right: 36px; font-size: 10px; }
.close { position: absolute; right: 0; top: 0; width: 29px; height: 17px; background: #e5533f; color: #fff; font-weight: bold; }
.dlgbody { flex: 1; display: flex; background: #f5f5f5; border: 1px solid #cfcfcf; padding: 13px 13px 13px 14px; gap: 9px; }
.rules { width: 145px; }
.rules li svg { margin-left: -1px; }
.rules .sub { padding-left: 15px; }
.rules .sub svg { width: 14px; }
.dim { background: #c3c3c3; color: #777; }
.gridbox { flex: 1; border: 1px solid #c8c8c8; background: #f9f9f9; }
.grid { width: 100%; table-layout: fixed; border-collapse: collapse; }
.g1 { width: 37.5%; } .g2 { width: 12.5%; }
.grid tr { height: 14px; }
.grid th { font-weight: normal; text-align: left; background: #efefef; border-bottom: 1px solid #ccc; }
.grid th, .grid td { padding: 0 2px; line-height: 12px; border-right: 1px solid #e0e0e0; }
.grid td { border-bottom: 1px solid #e8e8e8; }
.grid .mid { text-align: center; }
.sort { display: flex; align-items: center; justify-content: space-between; padding-right: 3px; }
.rule { display: flex; align-items: center; gap: 1px; margin-left: -1px; }
.rule svg { height: 12px; }
.picked .rule svg { background: #f5f5f5; }
.grid input { appearance: none; display: block; margin: 0 auto; width: 12px; height: 12px; background: #fff; border: 1px solid #d0d0d0; border-radius: 2px; }
.grid input:checked::after { content: ""; display: block; width: 6px; height: 3px; margin: 2px 0 0 2px; border: solid #555; border-width: 0 0 1px 1px; transform: rotate(-45deg); }
.dlgfoot { display: flex; gap: 7px; padding-top: 7px; }
.dlgfoot button { width: 59px; height: 20px; background: #fbfbfb; border: 1px solid #cfcfcf; border-radius: 3px; }
.dlgfoot .runbtn { width: 126px; margin-right: auto; }
.dlgfoot .ok { border-color: #6fa0cc; }

.pointer { position: absolute; left: 895px; top: 129px; width: 30px; height: 30px; border-radius: 50%; background: rgba(245, 185, 85, .5); padding: 18px 0 0 15px; }
.pointer svg { width: 10px; height: 15px; }
.brand { position: absolute; right: 42px; top: 29px; display: flex; align-items: center; color: #505050; line-height: 30px; }
.brand svg { width: 36px; height: 32px; margin-right: 3px; }
.cn { font-family: "Noto Sans CJK SC", sans-serif; font-size: 22px; font-weight: 400; margin-top: -4px; }
.en { font-family: Roboto, sans-serif; font-size: 24px; font-weight: 300; margin-top: -1px; }
.drawer { position: absolute; left: 0; top: 584px; width: 29px; height: 24px; border-radius: 0 3px 3px 0; background: rgba(175, 175, 175, .75); display: flex; flex-direction: column; justify-content: center; gap: 3px; padding-left: 9px; }
.drawer i { width: 13px; height: 2px; background: #f4f4f4; }
.corner { position: absolute; width: 96px; height: 96px; border: 0 solid #08b980; pointer-events: none; }
.tl { left: 0; top: 0; border-width: 4px 0 0 5px; }
.tr { right: 0; top: 0; border-width: 4px 5px 0 0; }
.bl { left: 0; bottom: 0; border-width: 0 0 5px 5px; }
.br { right: 0; bottom: 0; border-width: 0 5px 5px 0; }
```
